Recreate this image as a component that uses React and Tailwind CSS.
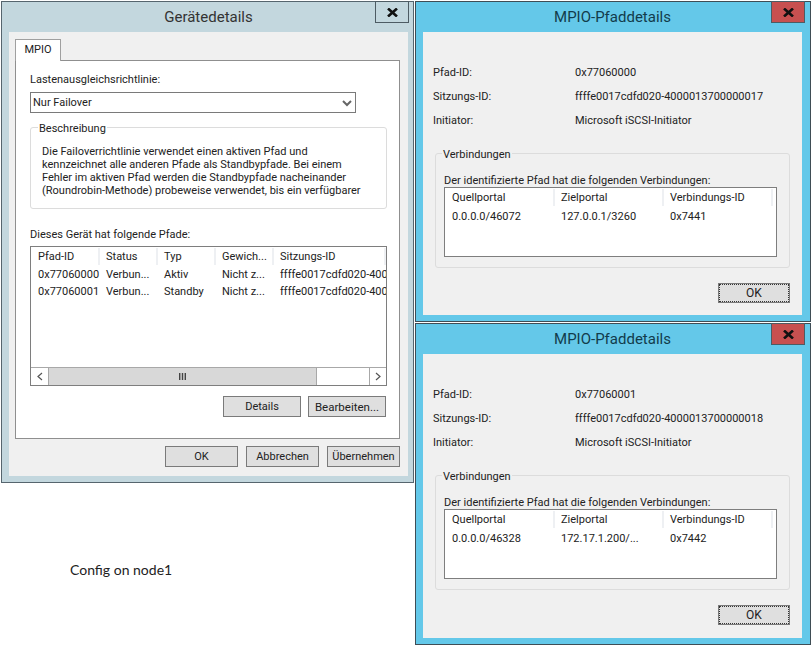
const font = "font-['Roboto','Open_Sans',sans-serif]";

function CloseButton({ red }) {
  return (
    <div className={`flex h-[22px] w-[34px] items-center justify-center border border-[#4d5b63] ${red ? "bg-[#c75050]" : "bg-[#c3d7de]"}`}>
      <svg width="11" height="9" viewBox="0 0 11 9" fill="none" stroke="#111" strokeWidth="2.6">
        <path d="M1 0.5 L10 8.5 M10 0.5 L1 8.5" />
      </svg>
    </div>
  );
}

function Button({ children, className = "" }) {
  return (
    <div className={`flex items-center justify-center border border-[#7a7a7a] bg-[#dfdfdf] text-[#222] ${className}`}>
      {children}
    </div>
  );
}

function Group({ label, className = "", children }) {
  return (
    <div className={`relative rounded-[3px] border border-[#dcdcdc] ${className}`}>
      <span className="absolute -top-[7px] left-[6px] bg-[#f0f0f0] px-px leading-[16px]">{label}</span>
      {children}
    </div>
  );
}

function HeaderCell({ width, children }) {
  return (
    <div style={{ width }} className="h-[17px] shrink-0 truncate border-r-2 border-[#eef0f3] pl-[6px] leading-[18px]">
      {children}
    </div>
  );
}

function PathWindow({ top, height, pathId, sessionId, source, target, connection }) {
  return (
    <div style={{ top, height }} className={`absolute left-[415px] flex w-[396px] flex-col border border-[#3f4d55] bg-[#64c8e9] pb-[6px] pl-[7px] pr-[8px] ${font}`}>
      <div className="relative flex h-[30px] shrink-0 items-center justify-center text-[15px] text-[#123c4c]">
        MPIO-Pfaddetails
        <div className="absolute -top-px right-[-3px]"><CloseButton red /></div>
      </div>
      <div className="flex flex-1 flex-col bg-[#f0f0f0] pl-[10px] pr-[12px] text-[11px] text-[#222]">
        <div className="mt-[33px] grid grid-cols-[142px_1fr] gap-y-[8px] leading-[16px]">
          <span>Pfad-ID:</span><span>{pathId}</span>
          <span>Sitzungs-ID:</span><span>{sessionId}</span>
          <span>Initiator:</span><span>Microsoft iSCSI-Initiator</span>
        </div>
        <Group label="Verbindungen" className="ml-[2px] mt-[24px] h-[115px] px-[8px] pt-[20px]">
          <div className="leading-[13px]">Der identifizierte Pfad hat die folgenden Verbindungen:</div>
          <div className="h-[70px] w-[333px] border border-[#7e7e7e] bg-white p-px">
            <div className="flex">
              <HeaderCell width={109}>Quellportal</HeaderCell>
              <HeaderCell width={109}>Zielportal</HeaderCell>
              <HeaderCell width={109}>Verbindungs-ID</HeaderCell>
            </div>
            <div className="mt-[2px] flex leading-[17px]">
              <span className="w-[109px] pl-[6px]">{source}</span>
              <span className="w-[109px] pl-[6px]">{target}</span>
              <span className="pl-[6px]">{connection}</span>
            </div>
          </div>
        </Group>
        <div className="mt-[15px] flex justify-end">
          <Button className="h-[20px] w-[72px] border-[#3f7fb0] text-[12px] outline-1 -outline-offset-2 outline-dotted outline-[#333]">OK</Button>
        </div>
      </div>
    </div>
  );
}

function DeviceWindow() {
  const columns = [
    ["Pfad-ID", 68],
    ["Status", 58],
    ["Typ", 58],
    ["Gewich...", 58],
    ["Sitzungs-ID", 112],
  ];
  const rows = [
    ["0x77060000", "Verbun...", "Aktiv", "Nicht z...", "ffffe0017cdfd020-400"],
    ["0x77060001", "Verbun...", "Standby", "Nicht z...", "ffffe0017cdfd020-400"],
  ];
  return (
    <div className={`absolute left-[1px] top-[1px] flex h-[482px] w-[413px] flex-col border border-[#56656e] bg-[#c3d7de] pb-[6px] pl-[7px] pr-[5px] ${font}`}>
      <div className="relative flex h-[30px] shrink-0 items-center justify-center text-[15px] text-[#333]">
        Gerätedetails
        <div className="absolute -top-px right-[-1px]"><CloseButton /></div>
      </div>
      <div className="flex flex-1 flex-col bg-[#f0f0f0] pl-[6px] pr-[8px] text-[11px] text-[#222]">
        <div className="relative z-10 mt-[7px] flex h-[22px] w-[46px] items-center justify-center border border-b-0 border-[#a0a0a0] bg-white">MPIO</div>
        <div className="-mt-px h-[379px] border border-[#8f8f8f] bg-white px-[14px]">
          <div className="mt-[11px] leading-[16px]">Lastenausgleichsrichtlinie:</div>
          <div className="mt-[4px] flex h-[21px] w-[326px] items-center justify-between border border-[#7a7a7a] bg-white pl-[2px] pr-[3px] pt-[2px]">
            Nur Failover
            <svg width="10" height="7" viewBox="0 0 10 7" fill="none" stroke="#666" strokeWidth="2">
              <path d="M1 1 L5 5 L9 1" />
            </svg>
          </div>
          <div className="relative mt-[14px] h-[82px] w-[357px] rounded-[3px] border border-[#dcdcdc] px-[11px] pt-[17px] leading-[13px]">
            <span className="absolute -top-[7px] left-[7px] bg-white px-px leading-[16px]">Beschreibung</span>
            <div className="whitespace-nowrap">Die Failoverrichtlinie verwendet einen aktiven Pfad und</div>
            <div className="whitespace-nowrap">kennzeichnet alle anderen Pfade als Standbypfade. Bei einem</div>
            <div className="whitespace-nowrap">Fehler im aktiven Pfad werden die Standbypfade nacheinander</div>
            <div className="whitespace-nowrap">(Roundrobin-Methode) probeweise verwendet, bis ein verfügbarer</div>
          </div>
          <div className="mt-[18px] leading-[16px]">Dieses Gerät hat folgende Pfade:</div>
          <div className="mt-[3px] flex h-[140px] w-[357px] flex-col border border-[#7e7e7e] bg-white">
            <div className="mt-px flex overflow-hidden pl-px">
              {columns.map(([name, width]) => (
                <HeaderCell key={name} width={width}>{name}</HeaderCell>
              ))}
            </div>
            <div className="mt-[2px] flex-1 overflow-hidden pl-px">
              {rows.map((row) => (
                <div key={row[0]} className="flex h-[17px] items-center whitespace-nowrap">
                  {row.map((cell, i) => (
                    <span key={i} style={{ width: columns[i][1] }} className="shrink-0 overflow-hidden pl-[6px]">{cell}</span>
                  ))}
                </div>
              ))}
            </div>
            <div className="flex h-[18px] items-stretch border-t border-[#a8a8a8] bg-white">
              <div className="flex w-[18px] items-center justify-center border-r border-[#a8a8a8]">
                <svg width="6" height="9" viewBox="0 0 6 9" fill="none" stroke="#555" strokeWidth="1.2"><path d="M5 1 L1 4.5 L5 8" /></svg>
              </div>
              <div className="flex w-[268px] items-center justify-center border-r border-[#a8a8a8] bg-[#d8d8d8]">
                <svg width="7" height="7" viewBox="0 0 7 7" fill="#444"><path d="M0 0h1.4v7H0zM2.8 0h1.4v7H2.8zM5.6 0H7v7H5.6z" /></svg>
              </div>
              <div className="flex-1" />
              <div className="flex w-[17px] items-center justify-center border-l border-[#a8a8a8]">
                <svg width="6" height="9" viewBox="0 0 6 9" fill="none" stroke="#555" strokeWidth="1.2"><path d="M1 1 L5 4.5 L1 8" /></svg>
              </div>
            </div>
          </div>
          <div className="mt-[10px] flex w-[356px] justify-end gap-[7px]">
            <Button className="h-[21px] w-[78px] pt-[2px]">Details</Button>
            <Button className="h-[21px] w-[78px] pt-[2px] text-[11.5px]">Bearbeiten...</Button>
          </div>
        </div>
        <div className="mt-[7px] flex justify-end gap-[8px]">
          <Button className="h-[21px] w-[73px] pt-[2px]">OK</Button>
          <Button className="h-[21px] w-[73px] pt-[2px]">Abbrechen</Button>
          <Button className="h-[21px] w-[73px] pt-[2px]">Übernehmen</Button>
        </div>
      </div>
    </div>
  );
}

export default function App() {
  return (
    <div className="relative h-[646px] w-[812px] overflow-hidden bg-white">
      <DeviceWindow />
      <PathWindow top={1} height={321} pathId="0x77060000" sessionId="ffffe0017cdfd020-4000013700000017" source="0.0.0.0/46072" target="127.0.0.1/3260" connection="0x7441" />
      <PathWindow top={323} height={322} pathId="0x77060001" sessionId="ffffe0017cdfd020-4000013700000018" source="0.0.0.0/46328" target="172.17.1.200/..." connection="0x7442" />
      <div className="absolute left-[70px] top-[559px] font-['Lato',sans-serif] text-[14px] text-[#222]">Config on node1</div>
    </div>
  );
}
